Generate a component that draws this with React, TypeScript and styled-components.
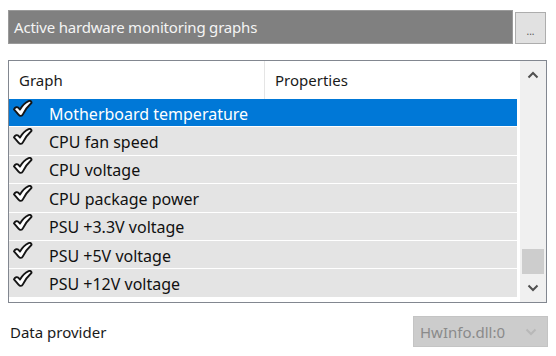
import styled, { createGlobalStyle } from 'styled-components';

const GlobalStyle = createGlobalStyle`
  html, body {
    margin: 0;
    padding: 0;
    background: #ffffff;
  }
  body {
    font-family: "Noto Sans", "Liberation Sans", sans-serif;
    font-size: 15px;
  }
`

const Page = styled.div`
  width: 556px;
  height: 356px;
  box-sizing: border-box;
  padding: 10px 8px 0 8px;
  display: flex;
  flex-direction: column;
`
const TopRow = styled.div`
  display: flex;
  align-items: flex-start;
  gap: 2px;
  height: 34px;
`
const TitleBar = styled.div`
  flex: 1;
  height: 34px;
  box-sizing: border-box;
  background-color: #808080;
  border: 1px solid #9a9a9a;
  color: #f4f4f4;
  display: flex;
  align-items: center;
  padding-left: 5px;
  letter-spacing: -0.2px;
`
const MoreButton = styled.div`
  width: 31px;
  height: 32px;
  margin-top: 2px;
  margin-right: 2px;
  box-sizing: border-box;
  background-color: #e1e1e1;
  border: 1px solid #adadad;
  color: #555;
  font-size: 10px;
  display: flex;
  align-items: center;
  justify-content: center;
  padding-top: 6px;
`
const ListBox = styled.div`
  margin-top: 16px;
  width: 539px;
  height: 243px;
  box-sizing: border-box;
  border: 1px solid #828790;
  display: flex;
`
const ListMain = styled.div`
  flex: 1;
  display: flex;
  flex-direction: column;
`
const HeaderRow = styled.div`
  height: 38px;
  display: flex;
  align-items: center;
`
const HeaderCell = styled.div<{ $width?: number }>`
  width: ${p => (p.$width ? `${p.$width}px` : 'auto')};
  flex: ${p => (p.$width ? 'none' : '1')};
  height: 100%;
  box-sizing: border-box;
  display: flex;
  align-items: center;
  padding-left: 10px;
  color: #1a1a1a;
  border-right: ${p => (p.$width ? '1px solid #e5e5e5' : 'none')};
`
const Row = styled.div<{ $selected?: boolean }>`
  height: 28.4px;
  box-sizing: border-box;
  border-bottom: 1px solid #ffffff;
  margin-right: 3px;
  background-color: ${p => (p.$selected ? '#0078d7' : '#e4e4e4')};
  color: ${p => (p.$selected ? '#ffffff' : '#111111')};
  display: flex;
  align-items: center;
  font-size: 16px;
`
const CheckWrap = styled.div`
  width: 40px;
  height: 100%;
  padding-left: 3px;
  box-sizing: border-box;
  display: flex;
  align-items: flex-start;
  padding-top: 1px;
`
const RowLabel = styled.div`
  padding-top: 2px;
`
const ScrollBar = styled.div`
  width: 26px;
  background-color: #f0f0f0;
  display: flex;
  flex-direction: column;
  align-items: center;
`
const ArrowButton = styled.div`
  height: 28px;
  width: 100%;
  display: flex;
  align-items: center;
  justify-content: center;
`
const Track = styled.div`
  flex: 1;
  width: 100%;
  display: flex;
  flex-direction: column;
  justify-content: flex-end;
  align-items: center;
`
const Thumb = styled.div`
  width: 22px;
  height: 25px;
  background-color: #cdcdcd;
`
const BottomRow = styled.div`
  margin-top: 13px;
  display: flex;
  align-items: center;
  justify-content: space-between;
  padding-left: 2px;
`
const Label = styled.div`
  color: #1a1a1a;
`
const Combo = styled.div`
  width: 135px;
  height: 31px;
  box-sizing: border-box;
  background-color: #cccccc;
  border: 1px solid #c4c4c4;
  color: #8a8a8a;
  display: flex;
  align-items: center;
  justify-content: space-between;
  padding: 0 10px 0 6px;
`

const Check = () => (
  <svg width="21" height="17" viewBox="-0.5 -0.5 23 19">
    <path
      d="M1.5 10 C2.5 7.2 5.2 6.8 6.8 8.6 L8.2 10.2 C10.6 6 13.8 2.6 17.8 0.8 C20.4 -0.2 21.9 2 20.4 3.4 C16.6 6.8 13.8 10.8 11.4 15.6 C10.4 17.6 8 17.8 6.8 16 Z"
      fill="#ffffff"
      stroke="#151515"
      strokeWidth="2.1"
      strokeLinejoin="round"
    />
  </svg>
)

const Chevron = ({ up, color }: { up?: boolean; color: string }) => (
  <svg width="12" height="8" viewBox="0 0 12 8">
    <path
      d={up ? 'M1.5 6.5 L6 2 L10.5 6.5' : 'M1.5 1.5 L6 6 L10.5 1.5'}
      fill="none"
      stroke={color}
      strokeWidth="2"
    />
  </svg>
)

const graphs = [
  'Motherboard temperature',
  'CPU fan speed',
  'CPU voltage',
  'CPU package power',
  'PSU +3.3V voltage',
  'PSU +5V voltage',
  'PSU +12V voltage',
]

const App = () => {
  return (
    <>
      <GlobalStyle />
      <Page>
        <TopRow>
          <TitleBar>Active hardware monitoring graphs</TitleBar>
          <MoreButton>...</MoreButton>
        </TopRow>
        <ListBox>
          <ListMain>
            <HeaderRow>
              <HeaderCell $width={256}>Graph</HeaderCell>
              <HeaderCell>Properties</HeaderCell>
            </HeaderRow>
            {graphs.map((g, i) => (
              <Row key={g} $selected={i === 0}>
                <CheckWrap>
                  <Check />
                </CheckWrap>
                <RowLabel>{g}</RowLabel>
              </Row>
            ))}
          </ListMain>
          <ScrollBar>
            <ArrowButton>
              <Chevron up color="#505050" />
            </ArrowButton>
            <Track>
              <Thumb />
            </Track>
            <ArrowButton>
              <Chevron color="#505050" />
            </ArrowButton>
          </ScrollBar>
        </ListBox>
        <BottomRow>
          <Label>Data provider</Label>
          <Combo>
            <span>HwInfo.dll:0</span>
            <Chevron color="#b8b8b8" />
          </Combo>
        </BottomRow>
      </Page>
    </>
  )
}

export default App
